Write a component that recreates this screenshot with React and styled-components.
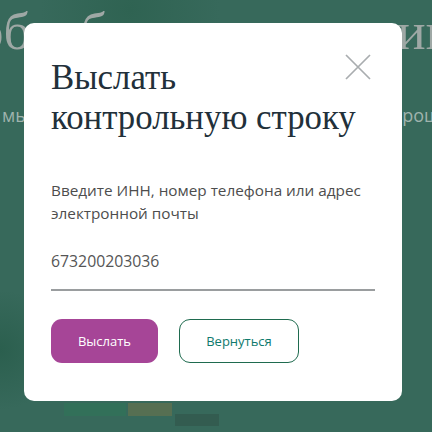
import React from "react";
import styled, { createGlobalStyle } from "styled-components";

const GlobalStyle = createGlobalStyle`
  html, body {
    margin: 0;
    padding: 0;
  }
  body {
    font-family: "Open Sans", "Liberation Sans", sans-serif;
  }
`;

const Page = styled.div`
  position: relative;
  width: 432px;
  height: 432px;
  overflow: hidden;
  background:
    linear-gradient(#327059, #327059) 64px 403px / 62px 13px no-repeat,
    linear-gradient(#566f52, #566f52) 128px 403px / 44px 13px no-repeat,
    linear-gradient(#335c50, #335c50) 175px 414px / 44px 12px no-repeat,
    radial-gradient(circle at 130px 10px, #2f6352 0, rgba(47, 99, 82, 0) 90px),
    radial-gradient(circle at 0px 350px, #2b5f4e 0, rgba(43, 95, 78, 0) 60px),
    #37695b;
`;

const BackHeading = styled.div`
  display: flex;
  justify-content: space-between;
  margin: 0 -22px 0 -23px;
  padding-top: 1px;
  font-family: "Liberation Serif", serif;
  font-size: 53px;
  line-height: 60px;
  color: #9ea8a5;
  white-space: nowrap;
`;

const BackText = styled.div`
  margin-top: 42px;
  display: flex;
  justify-content: space-between;
  margin-right: -8px;
  padding-left: 2px;
  font-size: 18px;
  line-height: 24px;
  color: #9fb3ad;
`;

const Modal = styled.section`
  position: absolute;
  left: 24px;
  top: 23px;
  box-sizing: border-box;
  width: 378px;
  height: 378px;
  padding: 35px 27px 0;
  background: #fff;
  border-radius: 10px;
`;

const Head = styled.div`
  display: flex;
  justify-content: space-between;
  align-items: flex-start;
`;

const Title = styled.h2`
  margin: 0;
  font-family: "Liberation Serif", serif;
  font-size: 34.8px;
  line-height: 40px;
  font-weight: 400;
  color: #22303a;
`;

const Close = styled.button`
  position: absolute;
  right: 31px;
  top: 31px;
  padding: 0;
  width: 26px;
  height: 26px;
  border: 0;
  background: none;
  svg {
    display: block;
  }
`;

const Hint = styled.p`
  margin: 41px 0 0;
  font-size: 15.3px;
  line-height: 23px;
  color: #4d4d4d;
`;

const Field = styled.div`
  margin-top: 24px;
  height: 40px;
  font-size: 15.8px;
  line-height: 25px;
  color: #555;
  border-bottom: 2px solid #9a9d9f;
`;

const Actions = styled.div`
  display: flex;
  gap: 21px;
  margin-top: 28px;
`;

const Button = styled.button`
  box-sizing: border-box;
  width: ${(p) => p.$width}px;
  height: 44px;
  padding: 0;
  font-family: "Open Sans", sans-serif;
  font-size: 13px;
  border-radius: 11px;
  color: ${(p) => (p.$primary ? "#fff" : "#0f7a6d")};
  background: ${(p) => (p.$primary ? "#a64597" : "#fff")};
  border: ${(p) => (p.$primary ? "0" : "1px solid #1f6b4f")};
`;

export default function App() {
  return (
    <Page>
      <GlobalStyle />
      <BackHeading>
        <span>обработка</span>
        <span>заявлении</span>
      </BackHeading>
      <BackText>
        <span>мы</span>
        <span>рош</span>
      </BackText>
      <Modal>
        <Head>
          <Title>
            Выслать
            <br />
            контрольную строку
          </Title>
          <Close aria-label="Закрыть">
            <svg width="26" height="26" viewBox="0 0 26 26">
              <path d="M1 1L25 25M25 1L1 25" stroke="#a9adaf" strokeWidth="1.7" fill="none" />
            </svg>
          </Close>
        </Head>
        <Hint>Введите ИНН, номер телефона или адрес электронной почты</Hint>
        <Field>673200203036</Field>
        <Actions>
          <Button $primary $width={107}>Выслать</Button>
          <Button $width={120}>Вернуться</Button>
        </Actions>
      </Modal>
    </Page>
  );
}
